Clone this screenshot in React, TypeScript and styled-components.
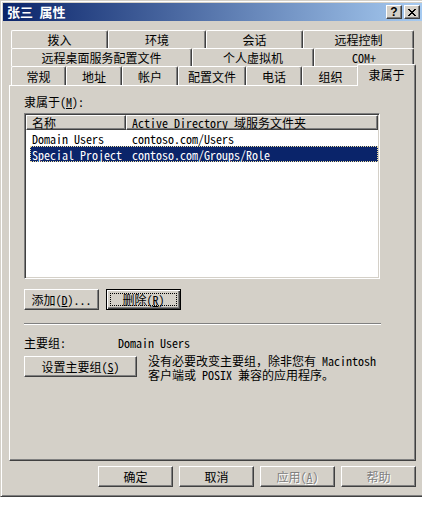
import React from "react";
import styled, { createGlobalStyle, css } from "styled-components";

const FACE = "#d4d0c8";
const SHADOW = "#808080";
const DARK = "#404040";
const FONT = `"Noto Sans Mono CJK SC", "Noto Sans CJK SC", "Liberation Mono", monospace`;

const GlobalStyle = createGlobalStyle`
  html, body { margin: 0; padding: 0; background: #fff; overflow: hidden; }
  body { font-family: ${FONT}; font-size: 12px; color: #000; }
  * { box-sizing: border-box; }
`;

const raised = css`
  border: 1px solid;
  border-color: #fff ${DARK} ${DARK} #fff;
  box-shadow: inset -1px -1px ${SHADOW};
`;

const Window = styled.div`
  width: 425px;
  height: 497px;
  background: ${FACE};
  border: 1px solid;
  border-color: ${FACE} ${DARK} ${DARK} ${FACE};
  box-shadow: inset 1px 1px #fff, inset -1px -1px ${SHADOW};
  padding: 2px;
  display: flex;
  flex-direction: column;
`;

const TitleBar = styled.div`
  height: 18px;
  display: flex;
  align-items: center;
  gap: 2px;
  padding: 0 2px;
  background: linear-gradient(to right, #0a246a, #a6caf0);
`;

const TitleText = styled.div`
  flex: 1;
  padding-left: 2px;
  color: #fff;
  font-weight: bold;
  font-size: 13px;
  line-height: 18px;
  white-space: pre;
`;

const CaptionButton = styled.div`
  width: 16px;
  height: 14px;
  ${raised};
  background: ${FACE};
  display: flex;
  align-items: center;
  justify-content: center;
  font: bold 12px "Liberation Sans", sans-serif;
  line-height: 12px;
`;

const Client = styled.div`
  flex: 1;
  display: flex;
  flex-direction: column;
  padding: 9px 6px 0 6px;
`;

const TabStrip = styled.div`
  display: flex;
  flex-direction: column;
  padding: 0 2px;
`;

const TabRow = styled.div<{ $h: number }>`
  display: flex;
  align-items: flex-start;
  height: ${(p) => p.$h}px;
`;

const Tab = styled.div<{ $w: number; $active?: boolean }>`
  flex: none;
  width: ${(p) => (p.$active ? p.$w + 4 : p.$w)}px;
  height: ${(p) => (p.$active ? "22px" : "100%")};
  margin: ${(p) => (p.$active ? "-2px -2px 0 -2px" : "0")};
  position: relative;
  z-index: ${(p) => (p.$active ? 2 : 1)};
  background: ${FACE};
  border-left: 1px solid #fff;
  border-top: 1px solid #fff;
  border-right: 1px solid ${DARK};
  box-shadow: inset -1px 0 ${SHADOW};
  border-radius: 2px 2px 0 0;
  display: flex;
  align-items: center;
  justify-content: center;
  padding-bottom: ${(p) => (p.$active ? "3px" : "0")};
  font-size: 12px;
  white-space: nowrap;
`;

const Panel = styled.div`
  height: 376px;
  border: 1px solid;
  border-color: #fff ${DARK} ${DARK} #fff;
  box-shadow: inset -1px -1px ${SHADOW};
  padding: 9px 0 0 14px;
  display: flex;
  flex-direction: column;
`;

const Label = styled.div`
  line-height: 13px;
  height: 13px;
  margin-bottom: 5px;
`;

const ListView = styled.div`
  width: 356px;
  height: 166px;
  background: #fff;
  border: 1px solid;
  border-color: ${SHADOW} #fff #fff ${SHADOW};
  box-shadow: inset 1px 1px ${DARK}, inset -1px -1px ${FACE};
  padding: 1px;
  display: flex;
  flex-direction: column;
`;

const Header = styled.div`
  display: flex;
  height: 15px;
  flex: none;
`;

const HeaderCell = styled.div<{ $w?: number }>`
  ${raised};
  background: ${FACE};
  width: ${(p) => (p.$w ? `${p.$w}px` : "auto")};
  flex: ${(p) => (p.$w ? "none" : "1")};
  padding-left: 5px;
  line-height: 13px;
  white-space: nowrap;
  overflow: hidden;
`;

const Row = styled.div<{ $selected?: boolean }>`
  display: flex;
  align-items: center;
  height: 16px;
  width: 348px;
  margin-left: 4px;
  padding-left: 1px;
  border: 1px dotted ${(p) => (p.$selected ? "#efe0a0" : "transparent")};
  background: ${(p) => (p.$selected ? "#0a246a" : "transparent")};
  color: ${(p) => (p.$selected ? "#fff" : "#000")};
  white-space: nowrap;
`;

const Cell = styled.div<{ $w?: number }>`
  width: ${(p) => (p.$w ? `${p.$w}px` : "auto")};
  flex: none;
`;

const ButtonRow = styled.div`
  display: flex;
  gap: 7px;
  margin-top: 10px;
`;

const PushButton = styled.div<{ $w: number; $default?: boolean; $disabled?: boolean }>`
  width: ${(p) => p.$w}px;
  height: 21px;
  flex: none;
  background: ${FACE};
  display: flex;
  align-items: center;
  justify-content: center;
  font-size: 12px;
  white-space: nowrap;
  color: ${(p) => (p.$disabled ? SHADOW : "#000")};
  text-shadow: ${(p) => (p.$disabled ? "1px 1px #fff" : "none")};
  ${(p) =>
    p.$default
      ? css`
          border: 1px solid #000;
          box-shadow: inset 1px 1px #fff, inset -1px -1px ${DARK}, inset -2px -2px ${SHADOW};
          outline: 1px dotted #000;
          outline-offset: -5px;
        `
      : raised};
`;

const Separator = styled.div`
  width: 357px;
  height: 2px;
  margin-top: 13px;
  border-top: 1px solid ${SHADOW};
  border-bottom: 1px solid #fff;
`;

const InfoRow = styled.div`
  display: flex;
  margin-top: 11px;
  line-height: 13px;
`;

const InfoLabel = styled.div`
  width: 94px;
`;

const SetRow = styled.div`
  display: flex;
  align-items: flex-start;
  gap: 11px;
  margin-top: 7px;
`;

const Note = styled.div`
  line-height: 14px;
  margin-top: -2px;
  white-space: nowrap;
`;

const BottomBar = styled.div`
  display: flex;
  justify-content: flex-end;
  gap: 6px;
  margin-top: 5px;
`;

const CloseGlyph = () => (
  <svg width="8" height="7" viewBox="0 0 8 7" shapeRendering="crispEdges">
    <path
      fill="#000"
      d="M0 0h2v1H0zM6 0h2v1H6zM1 1h2v1H1zM5 1h2v1H5zM2 2h4v1H2zM3 3h2v1H3zM2 4h4v1H2zM1 5h2v1H1zM5 5h2v1H5zM0 6h2v1H0zM6 6h2v1H6z"
    />
  </svg>
);

const tabRows: { h: number; tabs: { label: string; w: number; active?: boolean }[] }[] = [
  {
    h: 18,
    tabs: [
      { label: "拨入", w: 97 },
      { label: "环境", w: 98 },
      { label: "会话", w: 97 },
      { label: "远程控制", w: 111 },
    ],
  },
  {
    h: 18,
    tabs: [
      { label: "远程桌面服务配置文件", w: 181 },
      { label: "个人虚拟机", w: 122 },
      { label: "COM+", w: 100 },
    ],
  },
  {
    h: 19,
    tabs: [
      { label: "常规", w: 55 },
      { label: "地址", w: 56 },
      { label: "帐户", w: 56 },
      { label: "配置文件", w: 68 },
      { label: "电话", w: 56 },
      { label: "组织", w: 57 },
      { label: "隶属于", w: 55, active: true },
    ],
  },
];

const groups = [
  { name: "Domain Users", path: "contoso.com/Users" },
  { name: "Special Project", path: "contoso.com/Groups/Role", selected: true },
];

export default function App() {
  return (
    <>
      <GlobalStyle />
      <Window>
        <TitleBar>
          <TitleText>张三 属性</TitleText>
          <CaptionButton>?</CaptionButton>
          <CaptionButton>
            <CloseGlyph />
          </CaptionButton>
        </TitleBar>
        <Client>
          <TabStrip>
            {tabRows.map((row, i) => (
              <TabRow key={i} $h={row.h}>
                {row.tabs.map((t) => (
                  <Tab key={t.label} $w={t.w} $active={t.active}>
                    {t.label}
                  </Tab>
                ))}
              </TabRow>
            ))}
          </TabStrip>
          <Panel>
            <Label>
              隶属于(<u>M</u>):
            </Label>
            <ListView>
              <Header>
                <HeaderCell $w={100}>名称</HeaderCell>
                <HeaderCell>Active Directory 域服务文件夹</HeaderCell>
              </Header>
              {groups.map((g) => (
                <Row key={g.name} $selected={g.selected}>
                  <Cell $w={100}>{g.name}</Cell>
                  <Cell>{g.path}</Cell>
                </Row>
              ))}
            </ListView>
            <ButtonRow>
              <PushButton $w={75}>
                添加(<u>D</u>)...
              </PushButton>
              <PushButton $w={75} $default>
                删除(<u>R</u>)
              </PushButton>
            </ButtonRow>
            <Separator />
            <InfoRow>
              <InfoLabel>主要组:</InfoLabel>
              <div>Domain Users</div>
            </InfoRow>
            <SetRow>
              <PushButton $w={113}>
                设置主要组(<u>S</u>)
              </PushButton>
              <Note>
                没有必要改变主要组，除非您有 Macintosh
                <br />
                客户端或 POSIX 兼容的应用程序。
              </Note>
            </SetRow>
          </Panel>
          <BottomBar>
            <PushButton $w={75}>确定</PushButton>
            <PushButton $w={75}>取消</PushButton>
            <PushButton $w={75} $disabled>
              应用(<u>A</u>)
            </PushButton>
            <PushButton $w={75} $disabled>
              帮助
            </PushButton>
          </BottomBar>
        </Client>
      </Window>
    </>
  );
}
